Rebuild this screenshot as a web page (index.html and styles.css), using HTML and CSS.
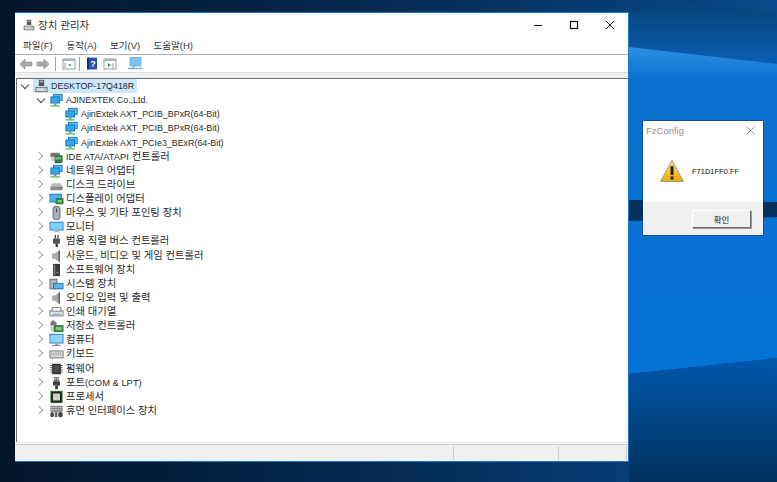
FILE: index.html
```html
<!DOCTYPE html>
<html lang="ko">
<head>
<meta charset="utf-8">
<title>장치 관리자</title>
<link rel="stylesheet" href="styles.css">
</head>
<body>
<svg class="defs" width="0" height="0" aria-hidden="true">
  <defs>
    <symbol id="i-pc" viewBox="0 0 16 16"><rect x="5" y="1" width="6" height="7" fill="#555"/><rect x="6" y="2" width="4" height="2" fill="#aaa"/><rect x="1" y="9" width="14" height="6" fill="#666"/><rect x="2" y="10" width="12" height="4" fill="#d8d8d8"/><rect x="11" y="11" width="2" height="1" fill="#3b3"/></symbol>
    <symbol id="i-net" viewBox="0 0 16 16"><rect x="4" y="1" width="11" height="8" fill="#1c6fb8"/><rect x="5" y="2" width="9" height="6" fill="#58c0f0"/><rect x="1" y="4" width="11" height="8" fill="#1c6fb8"/><rect x="2" y="5" width="9" height="6" fill="#2fa8ee"/><rect x="5" y="12" width="3" height="2" fill="#888"/><rect x="1" y="14" width="11" height="1.5" fill="#52c152"/></symbol>
    <symbol id="i-ide" viewBox="0 0 16 16"><rect x="1" y="3" width="11" height="5" rx="1" fill="#777"/><rect x="2" y="8" width="10" height="5" fill="#ccc"/><rect x="6" y="6" width="9" height="8" fill="#2f7d3a"/><rect x="7" y="8" width="6" height="3" fill="#6fbf6f"/><rect x="6" y="14" width="8" height="1" fill="#222"/></symbol>
    <symbol id="i-disk" viewBox="0 0 16 16"><path d="M3 6h10l2 4v3H1v-3z" fill="#bbb"/><rect x="1" y="10" width="14" height="4" fill="#8d8d8d"/><rect x="11" y="11" width="2" height="1" fill="#444"/></symbol>
    <symbol id="i-dsp" viewBox="0 0 16 16"><rect x="0" y="2" width="14" height="10" fill="#2b6f9e"/><rect x="1" y="3" width="12" height="8" fill="#4db5ee"/><rect x="7" y="7" width="9" height="7" fill="#2f7d3a"/><rect x="9" y="9" width="5" height="3" fill="#7fc77f"/></symbol>
    <symbol id="i-mouse" viewBox="0 0 16 16"><rect x="3.500" y="0" width="9" height="16" rx="4" fill="#5f676f"/><rect x="4.500" y="1" width="7" height="14" rx="3" fill="#aab1b9"/><rect x="7.500" y="3" width="1" height="4" fill="#333"/></symbol>
    <symbol id="i-mon" viewBox="0 0 16 16"><rect x="0" y="2" width="16" height="10" fill="#2a7cc0"/><rect x="1" y="3" width="14" height="8" fill="#7fd0fa"/><rect x="5" y="12" width="6" height="2" fill="#b8b8b8"/></symbol>
    <symbol id="i-usb" viewBox="0 0 16 16"><rect x="6" y="1" width="1.5" height="4" fill="#444"/><rect x="9" y="1" width="1.5" height="4" fill="#444"/><rect x="4" y="5" width="8" height="6" rx="1" fill="#555"/><rect x="7" y="11" width="2.5" height="4" fill="#333"/></symbol>
    <symbol id="i-snd" viewBox="0 0 16 16"><path d="M3 5h3l6-4v14l-6-4H3z" fill="#a6abb1"/><path d="M12 1v14l-2-1.400V2.400z" fill="#666"/></symbol>
    <symbol id="i-soft" viewBox="0 0 16 16"><rect x="4" y="1" width="8" height="14" fill="#3a3a3a"/><rect x="5" y="2" width="1.5" height="12" fill="#888"/><rect x="8" y="10" width="2" height="2" fill="#4caf50"/></symbol>
    <symbol id="i-sys" viewBox="0 0 16 16"><rect x="0" y="2" width="9" height="12" fill="#666"/><rect x="1" y="3" width="7" height="10" fill="#aeb8c0"/><rect x="4" y="7" width="12" height="7" fill="#1c6fb8"/><rect x="5" y="8" width="10" height="5" fill="#58b8ee"/></symbol>
    <symbol id="i-prn" viewBox="0 0 16 16"><rect x="0" y="6" width="16" height="7" fill="#777"/><rect x="1" y="7" width="14" height="5" fill="#e4e4e4"/><rect x="3" y="3" width="10" height="4" fill="#fff" stroke="#777" stroke-width="1"/><rect x="3" y="10" width="10" height="1" fill="#46a0d8"/></symbol>
    <symbol id="i-sto" viewBox="0 0 16 16"><path d="M4 1l4 3v3H1V4z" fill="#777"/><rect x="1" y="7" width="7" height="7" fill="#ccc"/><rect x="5" y="7" width="11" height="8" fill="#2f7d3a"/><rect x="7" y="9" width="7" height="4" fill="#7fc77f"/></symbol>
    <symbol id="i-cmp" viewBox="0 0 16 16"><rect x="0" y="1" width="16" height="11" fill="#2a7cc0"/><rect x="1" y="2" width="14" height="9" fill="#8ad6fb"/><rect x="6" y="12" width="4" height="2" fill="#999"/><rect x="3" y="14" width="10" height="1" fill="#777"/></symbol>
    <symbol id="i-kbd" viewBox="0 0 16 16"><rect x="0" y="4" width="16" height="9" fill="#6a6a6a"/><rect x="1" y="5" width="14" height="7" fill="#dcdcdc"/><path d="M2 7h12M2 9h12" stroke="#777" stroke-dasharray="1 1"/></symbol>
    <symbol id="i-fw" viewBox="0 0 16 16"><rect x="3" y="2" width="10" height="12" fill="#333"/><path d="M1 4h14M1 6.500h14M1 9h14M1 11.500h14" stroke="#444"/><rect x="5" y="4" width="6" height="8" fill="#4d4d4d"/></symbol>
    <symbol id="i-port" viewBox="0 0 16 16"><rect x="5" y="1" width="6" height="5" fill="#777"/><rect x="6" y="2" width="1" height="2" fill="#fff"/><rect x="9" y="2" width="1" height="2" fill="#fff"/><rect x="4" y="6" width="8" height="5" fill="#444"/><rect x="6.500" y="11" width="3" height="4" fill="#333"/></symbol>
    <symbol id="i-cpu" viewBox="0 0 16 16"><rect x="1" y="1" width="14" height="14" fill="#3b7a3f"/><rect x="2" y="2" width="12" height="12" fill="#222"/><rect x="4" y="4" width="8" height="8" fill="#d0d0c8"/></symbol>
    <symbol id="i-hid" viewBox="0 0 16 16"><rect x="1" y="2" width="14" height="7" fill="#8a8a8a"/><path d="M2 4h12M2 6.500h12" stroke="#eee" stroke-dasharray="1 1"/><rect x="1" y="9" width="4" height="6" rx="2" fill="#444"/><rect x="6" y="9" width="3" height="6" fill="#666"/><rect x="10" y="9" width="5" height="6" rx="2" fill="#444"/></symbol>
  </defs>
</svg>

<svg class="wallpaper" viewBox="0 0 777 482" preserveAspectRatio="none" aria-hidden="true">
  <defs>
    <linearGradient id="w-base" x1="0" x2="1" y1="0" y2="0">
      <stop offset="0" stop-color="#021529"/>
      <stop offset="0.5" stop-color="#032a52"/>
      <stop offset="1" stop-color="#0a4a8c"/>
    </linearGradient>
    <linearGradient id="w-top" x1="0" x2="0" y1="0" y2="1">
      <stop offset="0" stop-color="#084076"/>
      <stop offset="1" stop-color="#0a60b4"/>
    </linearGradient>
    <linearGradient id="w-mid" x1="0" x2="0" y1="0" y2="1">
      <stop offset="0" stop-color="#2c90e4"/>
      <stop offset="0.1" stop-color="#0b70d0"/>
      <stop offset="1" stop-color="#0572d6"/>
    </linearGradient>
    <linearGradient id="w-low" x1="0" x2="0" y1="0" y2="1">
      <stop offset="0" stop-color="#0058ac"/>
      <stop offset="1" stop-color="#00305c"/>
    </linearGradient>
  </defs>
  <rect width="777" height="482" fill="url(#w-base)"/>
  <polygon points="629,12 690,0 777,14 777,66 629,48" fill="url(#w-top)"/>
  <polygon points="629,47 777,64 777,358 629,374" fill="url(#w-mid)"/>
  <polygon points="629,200 777,202 777,217 629,221" fill="#062f5c"/>
  <polygon points="629,374 777,358 777,482 629,482" fill="url(#w-low)"/>
</svg>

<section class="window devmgr">
  <header class="titlebar">
    <svg class="title-icon"><use href="#i-pc"/></svg>
    <span class="title-text">장치 관리자</span>
    <div class="caption">
      <svg class="cap-btn" viewBox="0 0 36 23"><path d="M14 12.500h8" stroke="#111" fill="none"/></svg>
      <svg class="cap-btn" viewBox="0 0 36 23"><rect x="14.500" y="8.500" width="7" height="7" stroke="#111" stroke-width="1.200" fill="none"/></svg>
      <svg class="cap-btn" viewBox="0 0 36 23"><path d="M14 8l8 8M22 8l-8 8" stroke="#222" fill="none"/></svg>
    </div>
  </header>
  <nav class="menubar">
    <span class="menu-item">파일(F)</span>
    <span class="menu-item">동작(A)</span>
    <span class="menu-item">보기(V)</span>
    <span class="menu-item">도움말(H)</span>
  </nav>
  <div class="toolbar">
    <svg class="tool tool-back" viewBox="0 0 14 14"><path d="M1 7l5-5v3h7v4H6v3z" fill="#a8a8a8" stroke="#808080" stroke-width=".6"/></svg>
    <svg class="tool tool-fwd" viewBox="0 0 14 14"><path d="M13 7L8 2v3H1v4h7v3z" fill="#a8a8a8" stroke="#808080" stroke-width=".6"/></svg>
    <i class="tool-sep"></i>
    <svg class="tool tool-a" viewBox="0 0 14 14"><rect x="1" y="2" width="12" height="10" fill="#fff" stroke="#999"/><rect x="1" y="2" width="12" height="2" fill="#aab4c0"/><rect x="7" y="7" width="2" height="2" fill="#4caf50"/><path d="M3 6v5" stroke="#99a"/></svg>
    <i class="tool-sep tool-sep-b"></i>
    <svg class="tool tool-help" viewBox="0 0 11 14"><rect x="0" y="0" width="11" height="13" fill="#2a4fa8"/><rect x="0" y="0" width="2" height="13" fill="#16307a"/><text class="help-q" x="6.500" y="10.500" text-anchor="middle">?</text></svg>
    <svg class="tool tool-b" viewBox="0 0 14 14"><rect x="1" y="2" width="12" height="10" fill="#fff" stroke="#999"/><rect x="1" y="2" width="12" height="2" fill="#aab4c0"/><path d="M5 6v4l3-2z" fill="#2e9e3c"/><path d="M10 6v5" stroke="#99a"/></svg>
    <svg class="tool tool-c" viewBox="0 0 14 14"><rect x="2" y="0" width="11" height="9" fill="#7cc4ee" stroke="#5f9fc8" stroke-width=".6"/><path d="M7 9l-3 2" stroke="#889"/><path d="M0 11.500h14" stroke="#7cb0d8" stroke-width="1.500"/></svg>
  </div>
  <div class="tool-gap"></div>
  <ul class="tree">
    <li class="row root"><span class="chev open"></span><span class="sel"><svg class="ico"><use href="#i-pc"/></svg><span class="label lat">DESKTOP-17Q418R</span></span></li>
    <li class="row lv1"><span class="chev open"></span><svg class="ico"><use href="#i-net"/></svg><span class="label lat">AJINEXTEK Co.,Ltd.</span></li>
    <li class="row lv2"><svg class="ico"><use href="#i-net"/></svg><span class="label lat">AjinExtek AXT_PCIB_BPxR(64-Bit)</span></li>
    <li class="row lv2"><svg class="ico"><use href="#i-net"/></svg><span class="label lat">AjinExtek AXT_PCIB_BPxR(64-Bit)</span></li>
    <li class="row lv2"><svg class="ico"><use href="#i-net"/></svg><span class="label lat">AjinExtek AXT_PCIe3_BExR(64-Bit)</span></li>
    <li class="row lv1"><span class="chev"></span><svg class="ico"><use href="#i-ide"/></svg><span class="label"><span class="lat-mix">IDE ATA/ATAPI</span> 컨트롤러</span></li>
    <li class="row lv1"><span class="chev"></span><svg class="ico"><use href="#i-net"/></svg><span class="label">네트워크 어댑터</span></li>
    <li class="row lv1"><span class="chev"></span><svg class="ico"><use href="#i-disk"/></svg><span class="label">디스크 드라이브</span></li>
    <li class="row lv1"><span class="chev"></span><svg class="ico"><use href="#i-dsp"/></svg><span class="label">디스플레이 어댑터</span></li>
    <li class="row lv1"><span class="chev"></span><svg class="ico"><use href="#i-mouse"/></svg><span class="label">마우스 및 기타 포인팅 장치</span></li>
    <li class="row lv1"><span class="chev"></span><svg class="ico"><use href="#i-mon"/></svg><span class="label">모니터</span></li>
    <li class="row lv1"><span class="chev"></span><svg class="ico"><use href="#i-usb"/></svg><span class="label">범용 직렬 버스 컨트롤러</span></li>
    <li class="row lv1"><span class="chev"></span><svg class="ico"><use href="#i-snd"/></svg><span class="label">사운드, 비디오 및 게임 컨트롤러</span></li>
    <li class="row lv1"><span class="chev"></span><svg class="ico"><use href="#i-soft"/></svg><span class="label">소프트웨어 장치</span></li>
    <li class="row lv1"><span class="chev"></span><svg class="ico"><use href="#i-sys"/></svg><span class="label">시스템 장치</span></li>
    <li class="row lv1"><span class="chev"></span><svg class="ico"><use href="#i-snd"/></svg><span class="label">오디오 입력 및 출력</span></li>
    <li class="row lv1"><span class="chev"></span><svg class="ico"><use href="#i-prn"/></svg><span class="label">인쇄 대기열</span></li>
    <li class="row lv1"><span class="chev"></span><svg class="ico"><use href="#i-sto"/></svg><span class="label">저장소 컨트롤러</span></li>
    <li class="row lv1"><span class="chev"></span><svg class="ico"><use href="#i-cmp"/></svg><span class="label">컴퓨터</span></li>
    <li class="row lv1"><span class="chev"></span><svg class="ico"><use href="#i-kbd"/></svg><span class="label">키보드</span></li>
    <li class="row lv1"><span class="chev"></span><svg class="ico"><use href="#i-fw"/></svg><span class="label">펌웨어</span></li>
    <li class="row lv1"><span class="chev"></span><svg class="ico"><use href="#i-port"/></svg><span class="label">포트<span class="lat-mix">(COM &amp; LPT)</span></span></li>
    <li class="row lv1"><span class="chev"></span><svg class="ico"><use href="#i-cpu"/></svg><span class="label">프로세서</span></li>
    <li class="row lv1"><span class="chev"></span><svg class="ico"><use href="#i-hid"/></svg><span class="label">휴먼 인터페이스 장치</span></li>
  </ul>
  <div class="status-gap"></div>
  <footer class="statusbar">
    <span class="cell cell-a"></span>
    <span class="cell cell-b"></span>
    <span class="cell cell-c"></span>
  </footer>
</section>

<section class="window dialog">
  <header class="dlg-title">
    <span class="dlg-name">FzConfig</span>
    <svg class="dlg-x" viewBox="0 0 10 10"><path d="M.5.5l9 9M9.500.5l-9 9" stroke="#8a8a8a" fill="none"/></svg>
  </header>
  <div class="dlg-body">
    <svg class="warn" viewBox="0 0 24 22">
      <defs><linearGradient id="w-warn" x1="0" x2="0" y1="0" y2="1"><stop offset="0" stop-color="#ffe566"/><stop offset="1" stop-color="#edaa00"/></linearGradient></defs>
      <path d="M12 .5L23.500 21.500H.5z" fill="url(#w-warn)" stroke="#9a9a9a"/>
      <rect x="10.500" y="6" width="3" height="9" rx="1" fill="#222"/>
      <rect x="10.500" y="16.500" width="3" height="3" fill="#222"/>
    </svg>
    <span class="dlg-msg">F71D1FF0.FF</span>
  </div>
  <div class="dlg-foot">
    <button class="dlg-btn" type="button">확인</button>
  </div>
</section>
</body>
</html>
```
FILE: styles.css
```css
* { box-sizing: border-box; }
html, body { margin: 0; height: 100%; }
body {
  position: relative;
  width: 777px;
  height: 482px;
  overflow: hidden;
  background: #021529;
  font-family: "Liberation Sans", "Noto Sans CJK KR", sans-serif;
  font-size: 9.5px;
  color: #2a2a2a;
}
.defs { position: absolute; }
.wallpaper { position: absolute; left: 0; top: 0; width: 777px; height: 482px; display: block; }

.window { position: absolute; display: flex; flex-direction: column; background: #fff; }

.devmgr {
  left: 15px; top: 12px; width: 614px; height: 450px;
  border: 1px solid #1a78c8;
  border-left-width: 0;
}

.titlebar { display: flex; align-items: center; height: 23px; padding-left: 8px; flex: none; }
.title-icon { width: 12px; height: 12px; flex: none; }
.title-text { margin-left: 3px; font-size: 10.500px; color: #333; }
.caption { display: flex; margin-left: auto; }
.cap-btn { width: 36px; height: 23px; display: block; }

.menubar { display: flex; align-items: center; height: 18px; padding-left: 8px; border-bottom: 1px solid #b4b4b4; flex: none; box-sizing: content-box; }
.menu-item { width: 43.500px; color: #333; }

.toolbar { display: flex; align-items: center; height: 17px; padding: 1px 0 0 4px; flex: none; }
.tool { display: block; flex: none; width: 14px; height: 14px; }
.tool-fwd { margin-left: 3px; }
.tool-sep { width: 1px; height: 14px; background: #a0a0a0; margin-left: 5px; flex: none; }
.tool-a { margin-left: 6px; }
.tool-sep-b { margin-left: 3px; }
.tool-help { width: 10px; margin-left: 7px; }
.tool-b { margin-left: 6px; }
.tool-c { margin-left: 11px; }
.help-q { font: bold 10px "Liberation Sans", sans-serif; fill: #fff; }
.tool-gap { height: 6px; flex: none; background: #f1f1f1; border-top: 1px solid #e0e0e0; }

.tree {
  list-style: none;
  margin: 0 0 0 1px;
  padding: 0;
  flex: 1;
  border-top: 1px solid #6a6a6a;
  border-left: 1px solid #6a6a6a;
  min-height: 0;
  font-size: 10.300px;
}
.lat { font-size: 8.900px; }
.lat-mix { font-size: 9.400px; }
.row { display: flex; align-items: center; height: 14.130px; white-space: nowrap; }
.root { padding-left: 2px; }
.lv1 { padding-left: 18px; }
.lv2 { padding-left: 47px; }
.chev { width: 14px; height: 14px; flex: none; position: relative; }
.chev::before {
  content: "";
  position: absolute;
  left: 1px; top: 3px;
  width: 5px; height: 5px;
  border-right: 1px solid #a6a6a6;
  border-bottom: 1px solid #a6a6a6;
  transform: rotate(-45deg);
}
.chev.open::before { left: 3px; top: 2.500px; transform: rotate(45deg); border-color: #444; }
.ico { width: 15px; height: 14px; flex: none; }
.label { margin-left: 2px; line-height: 14px; }
.sel { display: flex; align-items: center; height: 14px; background: #cce8ff; padding: 0 3px 0 1px; }

.status-gap { height: 2px; flex: none; margin-left: 1px; border-top: 1px solid #e2e2e2; }
.statusbar { display: flex; height: 17px; flex: none; background: #f0f0f0; border-top: 1px solid #c8c8c8; padding: 1px 1px 1px 0; }
.cell { display: block; height: 14px; border-right: 1px solid #cfcfcf; }
.cell-a { width: 439px; }
.cell-b { width: 105px; }
.cell-c { flex: 1; }

.dialog { left: 643px; top: 121px; width: 120px; height: 114px; box-shadow: 0 0 0 1px rgba(10, 50, 100, .45); }
.dlg-title { display: flex; align-items: center; justify-content: space-between; height: 19px; padding: 0 8px 0 3px; flex: none; }
.dlg-name { color: #8f8f8f; font-size: 9.500px; }
.dlg-x { width: 9px; height: 9px; display: block; }
.dlg-body { flex: 1; display: flex; align-items: center; padding: 0 0 0 17px; }
.warn { width: 24px; height: 22px; display: block; flex: none; }
.dlg-msg { margin-left: 8px; color: #111; font-size: 7.500px; }
.dlg-foot { height: 33px; flex: none; background: #f0f0f0; display: flex; align-items: flex-start; justify-content: flex-end; padding: 8px 12px 0 0; }
.dlg-btn {
  width: 59px; height: 18px; padding: 0;
  font: inherit; font-size: 8.500px; color: #222;
  background: #f0f0f0;
  border: 1px solid;
  border-color: #fff #6e6e6e #6e6e6e #fff;
  box-shadow: 1px 1px 0 #9a9a9a;
}
```
